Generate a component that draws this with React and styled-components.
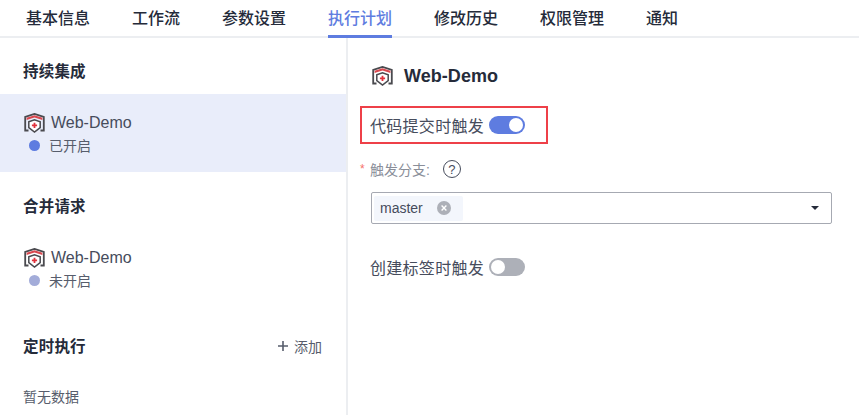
import styled, { createGlobalStyle } from 'styled-components';

const GlobalStyle = createGlobalStyle`
  html, body {
    margin: 0;
    padding: 0;
    background: #fff;
  }
  body {
    font-family: "Liberation Sans", "Noto Sans CJK SC", sans-serif;
    color: #252b3a;
  }
`;

const Page = styled.div`
  width: 859px;
  height: 415px;
  display: flex;
  flex-direction: column;
  overflow: hidden;
`;

const TabBar = styled.div`
  height: 36px;
  flex: none;
  display: flex;
  gap: 42px;
  padding-left: 26px;
  border-bottom: 2px solid #eceef1;
  box-sizing: content-box;
`;

const Tab = styled.div`
  height: 38px;
  box-sizing: border-box;
  font-size: 16px;
  line-height: 37px;
  font-weight: 500;
  color: ${(p) => (p.$active ? '#5e7ce0' : '#252b3a')};
  border-bottom: 3px solid ${(p) => (p.$active ? '#5e7ce0' : 'transparent')};
`;

const Body = styled.div`
  flex: 1;
  display: flex;
  min-height: 0;
`;

const Sidebar = styled.div`
  width: 346px;
  flex: none;
  border-right: 2px solid #eceef1;
  display: flex;
  flex-direction: column;
`;

const SectionHead = styled.div`
  height: 24px;
  margin-top: ${(p) => p.$top}px;
  padding: 0 24px 0 23px;
  display: flex;
  align-items: center;
  justify-content: space-between;
`;

const SectionTitle = styled.div`
  font-size: 15.5px;
  line-height: 24px;
  font-weight: 700;
  letter-spacing: 0.2px;
`;

const AddLink = styled.div`
  display: flex;
  align-items: center;
  gap: 5px;
  height: 22px;
  margin-bottom: 2px;
  font-size: 14px;
  color: #575d6c;
`;

const PipelineItem = styled.div`
  height: 78px;
  margin-top: ${(p) => p.$top}px;
  box-sizing: border-box;
  padding: 18px 0 0 24px;
  background: ${(p) => (p.$selected ? '#e9edfa' : 'transparent')};
`;

const ItemName = styled.div`
  display: flex;
  align-items: center;
  gap: 6px;
  height: 21px;
  font-size: 16px;
  color: #464c5c;
`;

const ItemStatus = styled.div`
  display: flex;
  align-items: center;
  gap: 9px;
  margin-top: 2px;
  padding-left: 5px;
  height: 20px;
  font-size: 14px;
  color: #575d6c;
`;

const Dot = styled.span`
  width: 11px;
  height: 11px;
  border-radius: 50%;
  background: ${(p) => (p.$on ? '#5e7ce0' : '#a3acd9')};
`;

const EmptyText = styled.div`
  margin-top: 28px;
  padding-left: 23px;
  height: 20px;
  line-height: 20px;
  font-size: 14px;
  color: #575d6c;
`;

const Detail = styled.div`
  flex: 1;
  display: flex;
  flex-direction: column;
  align-items: flex-start;
  padding: 25px 27px 0 12px;
`;

const DetailTitle = styled.div`
  display: flex;
  align-items: center;
  gap: 11px;
  height: 26px;
  margin-left: 12px;
  font-size: 18px;
  font-weight: 700;
  letter-spacing: 0.05px;
  color: #252b3a;
`;

const Highlight = styled.div`
  margin-top: 17px;
  width: 188px;
  height: 38px;
  box-sizing: border-box;
  border: 2px solid #ee4048;
  padding-left: 8px;
  display: flex;
  align-items: center;
`;

const SwitchRow = styled.div`
  display: flex;
  align-items: center;
  gap: 5px;
  font-size: 16px;
  letter-spacing: 0.29px;
  color: #464c5c;
  margin: ${(p) => p.$margin || '0'};
`;

const Track = styled.span`
  width: 36px;
  height: 18px;
  box-sizing: border-box;
  padding: 2px;
  border-radius: 9px;
  display: flex;
  justify-content: ${(p) => (p.$on ? 'flex-end' : 'flex-start')};
  background: ${(p) => (p.$on ? '#5e7ce0' : '#adb0b8')};
`;

const Knob = styled.span`
  width: 14px;
  height: 14px;
  border-radius: 50%;
  background: #fff;
`;

const FieldLabel = styled.div`
  margin-top: 14px;
  height: 22px;
  display: flex;
  align-items: center;
  font-size: 14px;
  color: #8a8e99;
`;

const Star = styled.span`
  width: 10px;
  color: #f66f6a;
  font-size: 12px;
`;

const HelpIcon = styled.span`
  width: 18px;
  height: 18px;
  margin-left: 13px;
  box-sizing: border-box;
  border: 1.5px solid #464c5c;
  border-radius: 50%;
  display: flex;
  align-items: center;
  justify-content: center;
  font-size: 13px;
  color: #464c5c;
`;

const Select = styled.div`
  margin: 12px 0 0 11px;
  width: 461px;
  height: 32px;
  box-sizing: border-box;
  border: 1px solid #a6a9b2;
  border-radius: 2px;
  padding: 2px 12px 2px 2px;
  display: flex;
  align-items: center;
  justify-content: space-between;
`;

const TagChip = styled.div`
  width: 89px;
  height: 25px;
  box-sizing: border-box;
  padding-left: 6px;
  border-radius: 2px;
  background: #f3f6fc;
  display: flex;
  align-items: center;
  gap: 14px;
  font-size: 14px;
  color: #464c5c;
`;

const Caret = styled.span`
  width: 0;
  height: 0;
  border-left: 4px solid transparent;
  border-right: 4px solid transparent;
  border-top: 4px solid #252b3a;
`;

const ShieldIcon = () => (
  <svg width="21" height="20" viewBox="0 0 21 20" fill="none">
    <path d="M4.5 17.5H1.2V3.8L10.5 0.9L19.8 3.8V17.5H16.5" stroke="#4a4a4f" strokeWidth="1.8" />
    <path d="M2.6 4.8L10.5 2.3L18.4 4.8V7L10.5 4.5L2.6 7Z" fill="#d9484f" />
    <path d="M4.8 8.8L10.5 6.8L16.2 8.8V14.6L10.5 19L4.8 14.6Z" stroke="#4a4a4f" strokeWidth="1.5" fill="#fff" />
    <path d="M9.6 9.8H11.4V11.5H13.1V13.2H11.4V15H9.6V13.2H7.9V11.5H9.6Z" fill="#e0323c" />
  </svg>
);

const PlusIcon = () => (
  <svg width="12" height="12" viewBox="0 0 12 12">
    <path d="M6 1V11M1 6H11" stroke="#575d6c" strokeWidth="1.6" />
  </svg>
);

const ClearIcon = () => (
  <svg width="14" height="14" viewBox="0 0 14 14">
    <circle cx="7" cy="7" r="7" fill="#adb0b8" />
    <path d="M4.6 4.6L9.4 9.4M9.4 4.6L4.6 9.4" stroke="#fff" strokeWidth="1.4" />
  </svg>
);

const tabs = ['基本信息', '工作流', '参数设置', '执行计划', '修改历史', '权限管理', '通知'];

const Item = ({ on, selected, top }) => (
  <PipelineItem $selected={selected} $top={top}>
    <ItemName>
      <ShieldIcon />
      Web-Demo
    </ItemName>
    <ItemStatus>
      <Dot $on={on} />
      {on ? '已开启' : '未开启'}
    </ItemStatus>
  </PipelineItem>
);

const App = () => (
  <Page>
    <GlobalStyle />
    <TabBar>
      {tabs.map((t) => (
        <Tab key={t} $active={t === '执行计划'}>
          {t}
        </Tab>
      ))}
    </TabBar>
    <Body>
      <Sidebar>
        <SectionHead $top={22}>
          <SectionTitle>持续集成</SectionTitle>
        </SectionHead>
        <Item on selected top={10} />
        <SectionHead $top={23}>
          <SectionTitle>合并请求</SectionTitle>
        </SectionHead>
        <Item top={10} />
        <SectionHead $top={28}>
          <SectionTitle>定时执行</SectionTitle>
          <AddLink>
            <PlusIcon />
            添加
          </AddLink>
        </SectionHead>
        <EmptyText>暂无数据</EmptyText>
      </Sidebar>
      <Detail>
        <DetailTitle>
          <ShieldIcon />
          Web-Demo
        </DetailTitle>
        <Highlight>
          <SwitchRow>
            代码提交时触发
            <Track $on>
              <Knob />
            </Track>
          </SwitchRow>
        </Highlight>
        <FieldLabel>
          <Star>*</Star>
          触发分支:
          <HelpIcon>?</HelpIcon>
        </FieldLabel>
        <Select>
          <TagChip>
            master
            <ClearIcon />
          </TagChip>
          <Caret />
        </Select>
        <SwitchRow $margin="31px 0 0 10px">
          创建标签时触发
          <Track>
            <Knob />
          </Track>
        </SwitchRow>
      </Detail>
    </Body>
  </Page>
);

export default App;
